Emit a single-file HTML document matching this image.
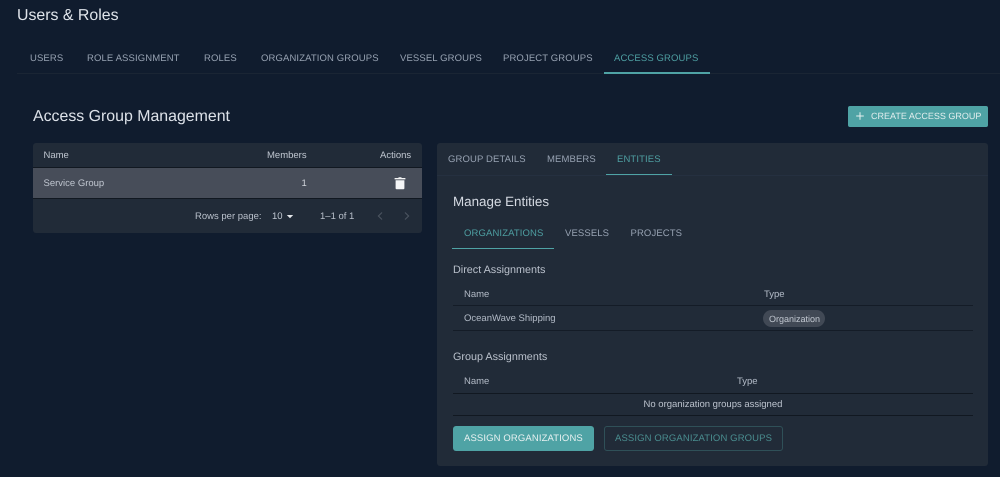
<!DOCTYPE html>
<html><head><meta charset="utf-8">
<style>
html,body{margin:0;padding:0;background:#101c2e;}
#r{position:relative;width:1000px;height:477px;overflow:hidden;background:#101c2e;font-family:"Liberation Sans",sans-serif;filter:blur(.35px);text-rendering:geometricPrecision;}
#r div{position:absolute;}
.t{white-space:nowrap;line-height:14px;height:14px;}
.tab{font-size:9.5px;letter-spacing:.12px;color:#98a3b3;}
.teal{color:#4e9fa2;}
.c{font-size:9.5px;color:#b4bcc8;}
.sub{font-size:10.8px;color:#b9c0cb;}
</style></head><body>
<div id="r">
<div class="t" style="left:17px;top:9px;font-size:15.9px;color:#dfe4ea;">Users &amp; Roles</div>

<div style="left:17px;top:73px;width:983px;height:1px;background:#1a2534;"></div>
<div class="t tab" style="left:30px;top:52px;">USERS</div>
<div class="t tab" style="left:87px;top:52px;">ROLE ASSIGNMENT</div>
<div class="t tab" style="left:204px;top:52px;">ROLES</div>
<div class="t tab" style="left:261px;top:52px;">ORGANIZATION GROUPS</div>
<div class="t tab" style="left:400px;top:52px;">VESSEL GROUPS</div>
<div class="t tab" style="left:503px;top:52px;">PROJECT GROUPS</div>
<div class="t tab teal" style="left:614px;top:52px;">ACCESS GROUPS</div>
<div style="left:604px;top:72px;width:106px;height:2px;background:#4fa3a5;"></div>

<div class="t" style="left:33px;top:110px;font-size:15.9px;color:#dde2e9;">Access Group Management</div>

<div style="left:848px;top:106px;width:140px;height:21px;background:#4fa3a5;border-radius:2px;"></div>
<svg style="position:absolute;left:855px;top:111px" width="10" height="10" viewBox="0 0 10 10"><path d="M5 1.2v7.6M1.2 5h7.6" stroke="#e6f0f0" stroke-width="1" fill="none"/></svg>
<div class="t" style="left:871px;top:109px;font-size:9px;color:#e2eeee;">CREATE ACCESS GROUP</div>

<!-- left table -->
<div style="left:33px;top:143px;width:389px;height:90px;background:#212b38;border-radius:3px;"></div>
<div style="left:33px;top:167px;width:389px;height:1px;background:#111821;"></div>
<div style="left:33px;top:168px;width:389px;height:30px;background:#474d59;"></div>
<div style="left:33px;top:198px;width:389px;height:1px;background:#111821;"></div>
<div class="t c" style="left:43.5px;top:149px;color:#c0c7d1;">Name</div>
<div class="t c" style="left:267px;top:149px;color:#c0c7d1;">Members</div>
<div class="t c" style="left:380px;top:149px;color:#c0c7d1;">Actions</div>
<div class="t c" style="left:43.5px;top:177px;color:#c0c6d0;">Service Group</div>
<div class="t c" style="left:301.5px;top:177px;color:#d0d4da;">1</div>
<svg style="position:absolute;left:393px;top:176px" width="14" height="14" viewBox="0 0 14 14"><path d="M2.6 4.3h8.8V12.2a1 1 0 0 1-1 1H3.6a1 1 0 0 1-1-1zM1.6 2h3.6l.6-.7h2.4l.6.7h3.6v1.4H1.6z" fill="#f4f5f6"/></svg>
<div class="t c" style="left:195px;top:210px;color:#b9c0cb;">Rows per page:</div>
<div class="t c" style="left:272px;top:210px;color:#c0c7d1;">10</div>
<svg style="position:absolute;left:286px;top:214px" width="8" height="5" viewBox="0 0 8 5"><path d="M.8 1h6.4L4 4.2z" fill="#e4e7eb"/></svg>
<div class="t c" style="left:320px;top:210px;color:#b9c0cb;">1–1 of 1</div>
<svg style="position:absolute;left:376px;top:211px" width="8" height="10" viewBox="0 0 8 10"><path d="M6 1.5 2.4 5 6 8.5" stroke="#4c5561" stroke-width="1.1" fill="none"/></svg>
<svg style="position:absolute;left:403px;top:211px" width="8" height="10" viewBox="0 0 8 10"><path d="M2 1.5 5.6 5 2 8.5" stroke="#4c5561" stroke-width="1.1" fill="none"/></svg>

<!-- right panel -->
<div style="left:437px;top:143px;width:551px;height:323px;background:#212b38;border-radius:3px;"></div>
<div style="left:437px;top:175px;width:551px;height:1px;background:#253040;"></div>
<div class="t tab" style="left:448px;top:153px;">GROUP DETAILS</div>
<div class="t tab" style="left:547px;top:153px;">MEMBERS</div>
<div class="t tab teal" style="left:617px;top:153px;">ENTITIES</div>
<div style="left:606px;top:174px;width:66px;height:1px;background:#4fa3a5;"></div>

<div class="t" style="left:453px;top:195px;font-size:13.4px;color:#d5dae2;">Manage Entities</div>
<div class="t tab teal" style="left:464px;top:227px;">ORGANIZATIONS</div>
<div class="t tab" style="left:565px;top:227px;">VESSELS</div>
<div class="t tab" style="left:630.5px;top:227px;">PROJECTS</div>
<div style="left:452px;top:248px;width:102px;height:1px;background:#4fa3a5;"></div>

<div class="t sub" style="left:453px;top:263px;">Direct Assignments</div>
<div style="left:453px;top:305px;width:520px;height:1px;background:#141c27;"></div>
<div style="left:453px;top:330px;width:520px;height:1px;background:#141c27;"></div>
<div class="t c" style="left:464px;top:288px;">Name</div>
<div class="t c" style="left:764px;top:288px;">Type</div>
<div class="t c" style="left:464px;top:312px;">OceanWave Shipping</div>
<div style="left:763px;top:310px;width:62px;height:17px;border-radius:9px;background:#414955;"></div>
<div class="t" style="left:769px;top:312px;font-size:9px;color:#c3c9d2;">Organization</div>

<div class="t sub" style="left:453px;top:350px;">Group Assignments</div>
<div style="left:453px;top:393px;width:520px;height:1px;background:#111821;"></div>
<div style="left:453px;top:415px;width:520px;height:1px;background:#111821;"></div>
<div class="t c" style="left:464px;top:375px;">Name</div>
<div class="t c" style="left:737px;top:375px;">Type</div>
<div class="t c" style="left:643.5px;top:398px;color:#bcc3ce;">No organization groups assigned</div>

<div style="left:453px;top:426px;width:141px;height:25px;background:#4fa3a5;border-radius:3px;"></div>
<div class="t" style="left:464px;top:432px;font-size:9.5px;letter-spacing:.12px;color:#e8f1f1;">ASSIGN ORGANIZATIONS</div>
<div style="left:604px;top:426px;width:177px;height:23px;border:1px solid #2f5058;border-radius:3px;"></div>
<div class="t" style="left:615px;top:432px;font-size:9.5px;letter-spacing:.12px;color:#4a8e90;">ASSIGN ORGANIZATION GROUPS</div>
</div>
</body></html>
